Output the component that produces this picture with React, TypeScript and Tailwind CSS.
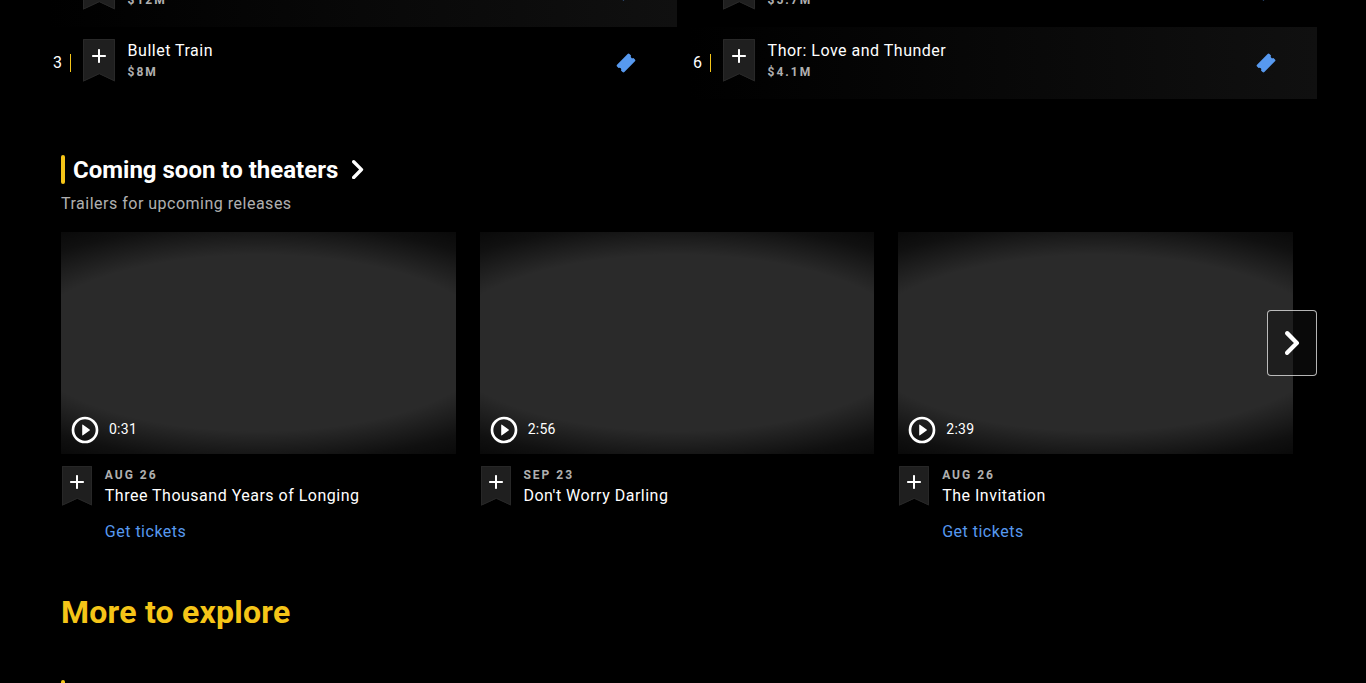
const CHEVRON =
  "M5.622.631A2.153 2.153 0 0 0 5 2.147c0 .568.224 1.113.622 1.515l8.249 8.34-8.25 8.34a2.16 2.16 0 0 0-.548 2.07c.196.74.768 1.317 1.499 1.515a2.104 2.104 0 0 0 2.048-.555l9.758-9.866a2.153 2.153 0 0 0 0-3.03L8.62.61C7.812-.207 6.45-.207 5.622.63z";

function Chevron({ className }: { className: string }) {
  return (
    <svg viewBox="0 0 24 24" fill="currentColor" className={className}>
      <path d={CHEVRON} />
    </svg>
  );
}

function Ribbon({ className }: { className: string }) {
  return (
    <svg viewBox="0 0 32 43" preserveAspectRatio="none" className={className}>
      <path d="M0 0h32v42.4l-15.7-7.3L0 42.7z" fill="#1f1f1f" />
      <path d="M.5 .5h31v41.3l-15.2-7.1L.5 42z" fill="none" stroke="#292929" />
    </svg>
  );
}

function WatchlistButton({ small = false }: { small?: boolean }) {
  return (
    <button className={small ? "grid h-10 w-[30px] shrink-0" : "grid h-[43px] w-8 shrink-0"}>
      <Ribbon className="col-start-1 row-start-1 h-full w-full" />
      <svg
        viewBox="0 0 24 24"
        fill="#fff"
        className={
          small
            ? "col-start-1 row-start-1 mt-1 h-6 w-6 justify-self-center"
            : "col-start-1 row-start-1 mt-[5px] h-6 w-6 justify-self-center"
        }
      >
        <path d="M18 13h-5v5c0 .55-.45 1-1 1s-1-.45-1-1v-5H6c-.55 0-1-.45-1-1s.45-1 1-1h5V6c0-.55.45-1 1-1s1 .45 1 1v5h5c.55 0 1 .45 1 1s-.45 1-1 1z" />
      </svg>
    </button>
  );
}

function Ticket() {
  return (
    <svg viewBox="0 0 24 24" className="h-6 w-6 shrink-0" fill="#5799ef">
      <path
        transform="rotate(-45 12 12)"
        d="M4.5 6.8h15a1.3 1.3 0 0 1 1.3 1.3v2.2a1.75 1.75 0 0 0 0 3.4v2.2a1.3 1.3 0 0 1-1.3 1.3h-15a1.3 1.3 0 0 1-1.3-1.3v-2.2a1.75 1.75 0 0 0 0-3.4V8.1a1.3 1.3 0 0 1 1.3-1.3z"
      />
    </svg>
  );
}

type Film = { rank?: number; title?: string; gross: string; lit: boolean };

const columns: Film[][] = [
  [
    { gross: "$12M", lit: true },
    { rank: 3, title: "Bullet Train", gross: "$8M", lit: false },
  ],
  [
    { gross: "$5.7M", lit: false },
    { rank: 6, title: "Thor: Love and Thunder", gross: "$4.1M", lit: true },
  ],
];

function FilmRow({ film }: { film: Film }) {
  return (
    <div
      className={
        film.lit
          ? "flex h-[72px] items-center bg-linear-to-r from-transparent to-[#101010] pr-[39px]"
          : "flex h-[72px] items-center pr-[39px]"
      }
    >
      <div className="flex w-[22px] items-center justify-between pl-1">
        <span className="w-[10px] text-base">{film.rank}</span>
        <span className="h-[18px] w-px shrink-0 bg-[#f5c518]" />
      </div>
      <div className="ml-3 flex h-12 flex-1 items-start">
        <WatchlistButton />
        <div className="ml-[12.6px]">
          <div className="h-6 text-base leading-6 tracking-[0.5px]">{film.title}</div>
          <div className="mt-px text-xs leading-4 font-bold tracking-[2px] text-white/70">{film.gross}</div>
        </div>
      </div>
      <Ticket />
    </div>
  );
}

const trailers = [
  { time: "0:31", date: "AUG 26", title: "Three Thousand Years of Longing", tickets: true },
  { time: "2:56", date: "SEP 23", title: "Don't Worry Darling", tickets: false },
  { time: "2:39", date: "AUG 26", title: "The Invitation", tickets: true },
];

function TrailerCard({ trailer }: { trailer: (typeof trailers)[number] }) {
  return (
    <div>
      <div className="flex h-[222px] items-end bg-[#2a2a2a] bg-[radial-gradient(ellipse_233px_88px_at_center,transparent_100%,rgba(0,0,0,0.62)_135%,rgba(0,0,0,0.78)_152%)] pb-2 pl-2">
        <svg viewBox="0 0 24 24" className="h-8 w-8" fill="none">
          <circle cx="12" cy="12" r="9" stroke="#fff" strokeWidth="2" />
          <path d="M9.9 8.3v7.4c0 .4.3.5.6.3l5-3.6c.3-.2.3-.6 0-.8l-5-3.6c-.3-.2-.6-.1-.6.3z" fill="#fff" />
        </svg>
        <span className="mb-[7px] ml-2 text-sm leading-5 tracking-[0.25px]">{trailer.time}</span>
      </div>
      <div className="flex pt-3 pl-px">
        <WatchlistButton small />
        <div className="ml-[12.8px] flex flex-col items-start">
          <div className="mt-px text-xs leading-4 font-bold tracking-[2px] text-white/70">{trailer.date}</div>
          <div className="mt-px text-base leading-6 tracking-[0.5px]">{trailer.title}</div>
          {trailer.tickets && (
            <a className="mt-3 text-base leading-6 tracking-[0.5px] text-[#5799ef]">Get tickets</a>
          )}
        </div>
      </div>
    </div>
  );
}

export default function App() {
  return (
    <main className="h-[683px] w-full overflow-hidden bg-black font-[Roboto,sans-serif] text-white">
      <section className="mt-[-45px] ml-[49px] grid w-[1268px] grid-cols-2 gap-x-3">
        {columns.map((films, i) => (
          <div key={i}>
            {films.map((film) => (
              <FilmRow key={film.gross} film={film} />
            ))}
          </div>
        ))}
      </section>

      <section className="mt-14 ml-[61px] w-[1256px]">
        <h3 className="flex h-[29px] items-center">
          <span className="h-[29px] w-1 rounded-full bg-[#f5c518]" />
          <span className="mt-0.5 ml-2 w-[265px] text-2xl leading-[29px] font-bold whitespace-nowrap">Coming soon to theaters</span>
          <Chevron className="ml-[10px] h-[19.2px] w-[19.2px]" />
        </h3>
        <p className="mt-2 text-base leading-6 tracking-[0.5px] text-white/70">Trailers for upcoming releases</p>
        <div className="relative mt-4 h-[312px]">
          <div className="grid w-[1232px] grid-cols-3 gap-6">
            {trailers.map((trailer) => (
              <TrailerCard key={trailer.title} trailer={trailer} />
            ))}
          </div>
          <button className="absolute top-[78px] right-0 flex h-[66px] w-[50px] items-center justify-center rounded border border-white/70 bg-[#121212]/50">
            <Chevron className="h-6 w-6" />
          </button>
        </div>
      </section>

      <section className="mt-12 ml-[61px]">
        <h2 className="text-[32px] leading-10 font-bold tracking-[0.235px] text-[#f5c518]">More to explore</h2>
        <div className="mt-12 h-[29px] w-1 rounded-full bg-[#f5c518]" />
      </section>
    </main>
  );
}
